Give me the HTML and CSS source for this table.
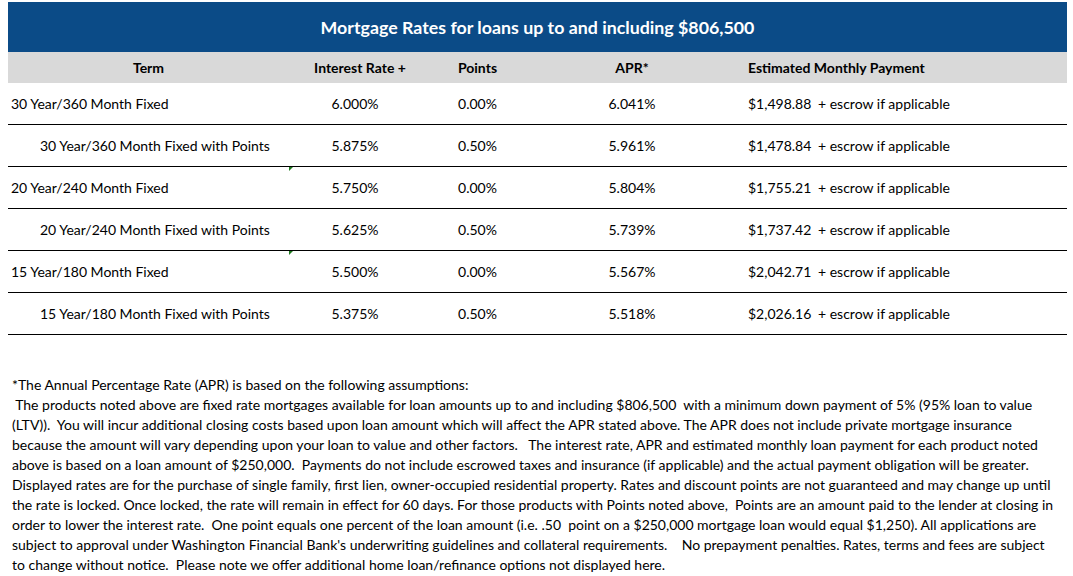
FILE: index.html
```html
<!DOCTYPE html>
<html>
<head>
<meta charset="utf-8">
<link rel="stylesheet" href="styles.css">
</head>
<body>
<div class="sheet">
  <div class="rates">
    <div class="title">Mortgage Rates for loans up to and including $806,500</div>
    <table class="grid">
      <colgroup>
        <col class="c-term"><col class="c-rate"><col class="c-pts"><col class="c-apr"><col class="c-pay">
      </colgroup>
      <thead>
        <tr class="head">
          <th>Term</th>
          <th class="h-rate">Interest Rate +</th>
          <th>Points</th>
          <th>APR*</th>
          <th class="h-pay">Estimated Monthly Payment</th>
        </tr>
      </thead>
      <tbody>
        <tr><td class="term">30 Year/360 Month Fixed</td><td class="num">6.000%</td><td class="num">0.00%</td><td class="num">6.041%</td><td class="pay"><span class="amt">$1,498.88</span><span>+ escrow if applicable</span></td></tr>
        <tr><td class="term indent">30 Year/360 Month Fixed with Points</td><td class="num">5.875%</td><td class="num">0.50%</td><td class="num">5.961%</td><td class="pay"><span class="amt">$1,478.84</span><span>+ escrow if applicable</span></td></tr>
        <tr><td class="term">20 Year/240 Month Fixed</td><td class="num flag">5.750%</td><td class="num">0.00%</td><td class="num">5.804%</td><td class="pay"><span class="amt">$1,755.21</span><span>+ escrow if applicable</span></td></tr>
        <tr><td class="term indent">20 Year/240 Month Fixed with Points</td><td class="num">5.625%</td><td class="num">0.50%</td><td class="num">5.739%</td><td class="pay"><span class="amt">$1,737.42</span><span>+ escrow if applicable</span></td></tr>
        <tr><td class="term">15 Year/180 Month Fixed</td><td class="num flag">5.500%</td><td class="num">0.00%</td><td class="num">5.567%</td><td class="pay"><span class="amt">$2,042.71</span><span>+ escrow if applicable</span></td></tr>
        <tr><td class="term indent">15 Year/180 Month Fixed with Points</td><td class="num">5.375%</td><td class="num">0.50%</td><td class="num">5.518%</td><td class="pay"><span class="amt">$2,026.16</span><span>+ escrow if applicable</span></td></tr>
      </tbody>
    </table>
  </div>
  <div class="notes">
<span class="ln">*The Annual Percentage Rate (APR) is based on the following assumptions:</span>
<span class="ln"> The products noted above are fixed rate mortgages available for loan amounts up to and including $806,500  with a minimum down payment of 5% (95% loan to value</span>
<span class="ln">(LTV)).  You will incur additional closing costs based upon loan amount which will affect the APR stated above. The APR does not include private mortgage insurance</span>
<span class="ln">because the amount will vary depending upon your loan to value and other factors.   The interest rate, APR and estimated monthly loan payment for each product noted</span>
<span class="ln">above is based on a loan amount of $250,000.  Payments do not include escrowed taxes and insurance (if applicable) and the actual payment obligation will be greater.</span>
<span class="ln">Displayed rates are for the purchase of single family, first lien, owner-occupied residential property. Rates and discount points are not guaranteed and may change up until</span>
<span class="ln">the rate is locked. Once locked, the rate will remain in effect for 60 days. For those products with Points noted above,  Points are an amount paid to the lender at closing in</span>
<span class="ln">order to lower the interest rate.  One point equals one percent of the loan amount (i.e. .50  point on a $250,000 mortgage loan would equal $1,250). All applications are</span>
<span class="ln">subject to approval under Washington Financial Bank's underwriting guidelines and collateral requirements.    No prepayment penalties. Rates, terms and fees are subject</span>
<span class="ln">to change without notice.  Please note we offer additional home loan/refinance options not displayed here.</span>
  </div>
</div>
</body>
</html>
```
FILE: styles.css
```css
html, body {
  margin: 0;
  padding: 0;
  background: #ffffff;
}
body {
  font-family: "Lato", "Liberation Sans", sans-serif;
  color: #000000;
}
.sheet {
  padding: 2px 6px 0 8px;
}
.rates {
  width: 1059px;
}
.title {
  background: #0b4b87;
  color: #ffffff;
  height: 50px;
  display: flex;
  align-items: center;
  justify-content: center;
  font-weight: 700;
  font-size: 17.8px;
}
.grid {
  width: 100%;
  border-collapse: collapse;
  table-layout: fixed;
  font-size: 14px;
}
.c-term { width: 281px; }
.c-rate { width: 132px; }
.c-pts { width: 113px; }
.c-apr { width: 196px; }
.c-pay { width: 337px; }
.head th {
  background: #d9d9d9;
  height: 31px;
  padding: 0;
  font-weight: 700;
  text-align: center;
}
.head .h-rate { padding-left: 10px; }
.head .h-pay { text-align: left; padding-left: 18px; }
tbody td {
  height: 41px;
  padding: 0;
  border-bottom: 1px solid #000000;
  white-space: nowrap;
}
tbody td.term { padding-left: 3px; }
tbody td.term.indent { padding-left: 32px; }
.num { text-align: center; }
.flag { position: relative; }
.flag::before {
  content: "";
  position: absolute;
  left: 0;
  top: 0;
  border-top: 4px solid #1e7a1e;
  border-right: 4px solid transparent;
}
tbody td.pay { padding-left: 18px; }
.amt {
  display: inline-block;
  width: 70px;
}
.notes {
  margin-top: 40px;
  padding-left: 4px;
  font-size: 14px;
  line-height: 20px;
}
.ln {
  display: block;
  white-space: pre;
}
```
